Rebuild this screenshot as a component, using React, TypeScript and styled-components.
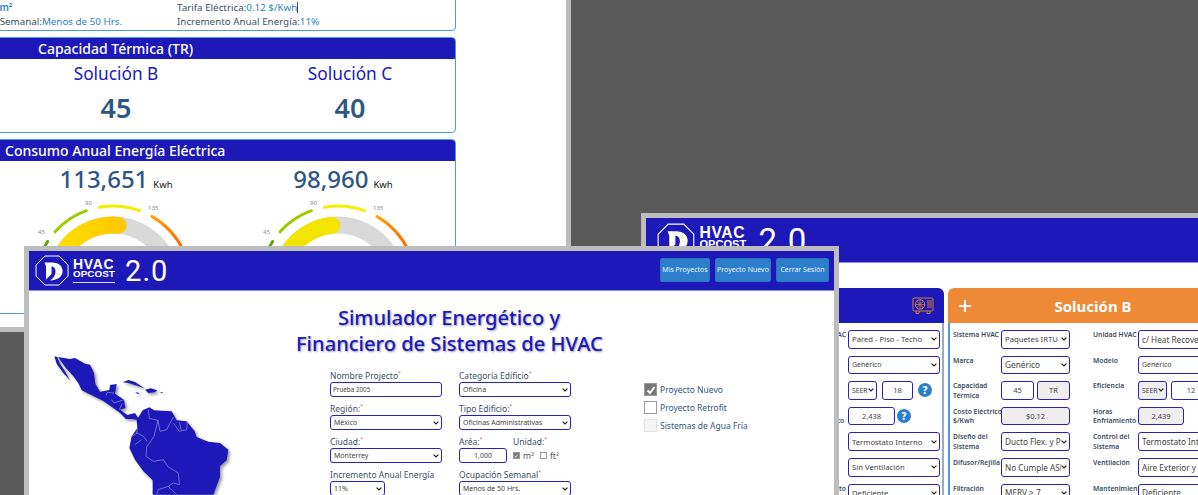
import React from "react";
import styled, { createGlobalStyle } from "styled-components";

const FONT = `"Noto Sans", "Open Sans", sans-serif`;
const BLUE = "#1c19b8";

const CHEVRON =
  "url(\"data:image/svg+xml,%3Csvg xmlns='http://www.w3.org/2000/svg' width='6' height='4' viewBox='0 0 6 4'%3E%3Cpath d='M.6.6 3 3 5.4.6' fill='none' stroke='%23222' stroke-width='1.2'/%3E%3C/svg%3E\")";

const GlobalStyle = createGlobalStyle`
  html, body { margin: 0; padding: 0; background: #595959; }
  body { width: 1198px; height: 495px; overflow: hidden; font-family: ${FONT}; }
`;

const Desktop = styled.div`
  position: relative;
  width: 1198px;
  height: 495px;
  overflow: hidden;
  background: #595959;
`;

const Win = styled.div<{ $left: number; $top: number; $width: number; $height: number }>`
  position: absolute;
  left: ${(p) => p.$left}px;
  top: ${(p) => p.$top}px;
  width: ${(p) => p.$width}px;
  height: ${(p) => p.$height}px;
  box-sizing: border-box;
  border: 5px solid #bdbdbd;
  background: #fff;
  overflow: hidden;
`;

/* report window (behind) */
const Report = styled.div`
  display: flex;
  flex-direction: column;
  gap: 6px;
  width: 516px;
`;

const Card = styled.section`
  box-sizing: border-box;
  border: 1px solid #4a9be8;
  border-radius: 4px;
  overflow: hidden;
`;

const InfoGrid = styled.div`
  display: grid;
  grid-template-columns: 229px 1fr;
  padding: 1px 0 1px 7px;
  font-size: 9.8px;
  line-height: 14px;
  color: #3c5068;
`;

const InfoValue = styled.span<{ $bold?: boolean }>`
  color: #2d7fcc;
  font-weight: ${(p) => (p.$bold ? 600 : 400)};
`;

const Caret = styled.span`
  display: inline-block;
  width: 1px;
  height: 11px;
  vertical-align: -2px;
  background: #2a4a7a;
`;

const CardTitle = styled.h3<{ $pad: number }>`
  margin: 0;
  height: 21px;
  padding-left: ${(p) => p.$pad}px;
  background: ${BLUE};
  color: #fff;
  font-size: 14px;
  font-weight: 500;
  line-height: 21px;
  white-space: nowrap;
`;

const SolutionGrid = styled.div`
  display: grid;
  grid-template-columns: 212px 212px;
  column-gap: 22px;
  padding-left: 69px;
`;

const SolutionCell = styled.div`
  display: flex;
  flex-direction: column;
  align-items: center;
  height: 73px;
`;

const SolutionName = styled.div`
  margin-top: 3px;
  color: ${BLUE};
  font-size: 17.3px;
  line-height: 24px;
`;

const SolutionNumber = styled.div`
  margin-top: 6px;
  color: #2e5684;
  font-size: 27px;
  font-weight: 600;
  line-height: 32px;
`;

const UsageCell = styled.div`
  display: flex;
  flex-direction: column;
`;

const UsageLine = styled.div<{ $shift: number }>`
  display: flex;
  align-items: baseline;
  justify-content: center;
  gap: 5px;
  padding-right: ${(p) => p.$shift}px;
  margin-top: 4px;
  height: 28px;
`;

const UsageNumber = styled.span`
  color: #2e5684;
  font-size: 24px;
  font-weight: 500;
  line-height: 28px;
`;

const UsageUnit = styled.span`
  color: #111;
  font-size: 9.5px;
`;

/* header */
const Bar = styled.header<{ $height: number; $pad: number }>`
  display: flex;
  align-items: center;
  box-sizing: border-box;
  height: ${(p) => p.$height}px;
  padding: 0 5px 0 ${(p) => p.$pad}px;
  background: ${BLUE};
  border-bottom: 1px solid #8e8ee0;
`;

const Brand = styled.div`
  display: flex;
  align-items: center;
`;

const BrandWords = styled.div<{ $scale: number }>`
  display: flex;
  flex-direction: column;
  width: ${(p) => 42 * p.$scale}px;
  margin-left: ${(p) => 4 * p.$scale}px;
  color: #fff;
  font-family: "Liberation Sans", sans-serif;
  font-size: ${(p) => 14 * p.$scale}px;
  font-weight: 700;
  letter-spacing: ${(p) => 0.6 * p.$scale}px;
  line-height: ${(p) => 10.5 * p.$scale}px;
`;

const BrandSub = styled.span<{ $scale: number }>`
  font-size: ${(p) => 9.9 * p.$scale}px;
  letter-spacing: 0;
`;

const BrandRule = styled.span<{ $scale: number }>`
  margin-top: 2px;
  border-top: 1px solid #d8d8f4;
  width: ${(p) => 42 * p.$scale}px;
`;

const Version = styled.span<{ $size: number; $gap: number }>`
  margin-left: ${(p) => p.$gap}px;
  color: #fff;
  font-family: "Roboto", sans-serif;
  font-size: ${(p) => p.$size}px;
  font-weight: 400;
  letter-spacing: 1px;
`;

const Actions = styled.nav`
  display: flex;
  gap: 5px;
  margin: 0 0 2px auto;
`;

const Action = styled.button<{ $width: number }>`
  width: ${(p) => p.$width}px;
  height: 24px;
  padding: 0;
  border: 1px solid #2a74c0;
  border-radius: 2px;
  background: #2d7fcc;
  color: #e8f2fb;
  font-family: ${FONT};
  font-size: 7px;
  white-space: nowrap;
`;

/* simulator form window */
const SimBody = styled.div`
  display: grid;
  grid-template-columns: 267px 306px 1fr;
`;

const MapColumn = styled.div`
  padding: 62px 0 0 21px;
`;

const Title = styled.h1`
  margin: 14px 0 0;
  color: ${BLUE};
  font-size: 20.1px;
  font-weight: 500;
  line-height: 26px;
  text-align: center;
  white-space: nowrap;
  text-shadow: 1px 1px 2px rgba(30, 30, 90, 0.45);
`;

const FormGrid = styled.div`
  display: grid;
  grid-template-columns: 112px 112px;
  column-gap: 17px;
  row-gap: 7px;
  margin: 14px 0 0 34px;
`;

const Field = styled.label`
  display: flex;
  flex-direction: column;
  gap: 1px;
  color: #3c5068;
  font-size: 8.5px;
  line-height: 10px;
  white-space: nowrap;
`;

const Req = styled.sup`
  color: #e06060;
  font-size: 5px;
  line-height: 0;
`;

const controlCss = `
  box-sizing: border-box;
  border: 1.3px solid #2a1fc4;
  border-radius: 3px;
  color: #444;
  font-family: ${FONT};
  outline: none;
`;

const Select = styled.select<{ $w?: number; $h?: number; $fs?: number; $gray?: boolean }>`
  ${controlCss}
  appearance: none;
  width: ${(p) => (p.$w ? `${p.$w}px` : "100%")};
  height: ${(p) => p.$h ?? 15}px;
  padding: 0 8px 0 3px;
  font-size: ${(p) => p.$fs ?? 7}px;
  background: ${(p) => (p.$gray ? "#efeded" : "#fff")} ${CHEVRON} no-repeat right 2px center;
`;

const TextBox = styled.input<{ $w?: number; $h?: number; $fs?: number; $gray?: boolean; $left?: boolean }>`
  ${controlCss}
  width: ${(p) => (p.$w ? `${p.$w}px` : "100%")};
  height: ${(p) => p.$h ?? 15}px;
  padding: 0 2px;
  font-size: ${(p) => p.$fs ?? 7}px;
  text-align: ${(p) => (p.$left ? "left" : "center")};
  background-color: ${(p) => (p.$gray ? "#efeded" : "#fff")};
`;

const AreaRow = styled.div`
  display: grid;
  grid-template-columns: 48px 1fr;
  column-gap: 6px;
`;

const UnitChecks = styled.div`
  display: flex;
  align-items: center;
  gap: 3px;
  height: 15px;
  font-size: 8.5px;
  color: #555;
`;

const MiniBox = styled.span<{ $on?: boolean; $gap?: number }>`
  display: inline-flex;
  align-items: center;
  justify-content: center;
  box-sizing: border-box;
  width: 7px;
  height: 7px;
  margin-left: ${(p) => p.$gap ?? 0}px;
  border: 1px solid #999;
  background: ${(p) => (p.$on ? "#777" : "#fff")};
  color: #fff;
  font-size: 6px;
`;

const CheckList = styled.div`
  display: flex;
  flex-direction: column;
  gap: 5px;
  margin: 92px 0 0 42px;
`;

const CheckRow = styled.div`
  display: flex;
  align-items: center;
  gap: 3px;
  height: 13px;
  color: #33557f;
  font-size: 8.5px;
  white-space: nowrap;
`;

const CheckBox = styled.span<{ $state: "on" | "off" | "dim" }>`
  display: flex;
  align-items: center;
  justify-content: center;
  box-sizing: border-box;
  width: 13px;
  height: 13px;
  border: 1px solid ${(p) => (p.$state === "dim" ? "#e2e2e2" : "#9a9a9a")};
  background: ${(p) => (p.$state === "on" ? "#777" : p.$state === "dim" ? "#f4f4f4" : "#fff")};
`;

/* solutions window */
const SolutionsBody = styled.div`
  display: flex;
  gap: 4px;
  padding: 25px 0 0 152px;
`;

const Panel = styled.section<{ $width: number }>`
  flex: none;
  width: ${(p) => p.$width}px;
  height: 300px;
  overflow: hidden;
`;

const PanelHead = styled.div<{ $color: string }>`
  display: flex;
  align-items: center;
  justify-content: space-between;
  position: relative;
  box-sizing: border-box;
  height: 35px;
  padding: 0 10px;
  border-radius: 6px 6px 0 0;
  background: ${(p) => p.$color};
  color: #fff;
`;

const PanelName = styled.span<{ $inset: number }>`
  position: absolute;
  left: 0;
  right: ${(p) => p.$inset}px;
  text-align: center;
  font-size: 15px;
  font-weight: 700;
`;

const PanelRows = styled.div<{ $side: "left" | "right" }>`
  display: flex;
  flex-direction: column;
  gap: 7px;
  height: 100%;
  padding-top: 7px;
  box-sizing: border-box;
  border-${(p) => p.$side}: 2px solid ${(p) => (p.$side === "left" ? "#4a9be8" : "#9fa8c4")};
`;

const PanelRow = styled.div<{ $cols: string }>`
  display: grid;
  grid-template-columns: ${(p) => p.$cols};
  align-items: start;
  height: 18.6px;
`;

const RowLabel = styled.span`
  color: #3c4c62;
  font-size: 6.8px;
  font-weight: 600;
  line-height: 9.5px;
  padding: 0 0 0 3px;
  white-space: pre;
`;

const RightLabel = styled(RowLabel)`
  text-align: right;
  direction: rtl;
  padding: 0 2px 0 0;
`;

const Pair = styled.div<{ $cols: string; $gap?: number }>`
  display: grid;
  grid-template-columns: ${(p) => p.$cols};
  column-gap: ${(p) => p.$gap ?? 3}px;
  align-items: center;
`;

const Help = styled.span`
  display: flex;
  align-items: center;
  justify-content: center;
  width: 14px;
  height: 14px;
  border-radius: 50%;
  background: #2d7fcc;
  color: #fff;
  font-size: 10px;
  font-weight: 800;
`;

const Logo = ({ h }: { h: number }) => (
  <svg width={h * 1.1} height={h} viewBox="0 0 34 31">
    <path d="M10 1 H24 L33 10 V21 L24 30 H10 L1 21 V10 Z" fill="none" stroke="#fff" strokeWidth="1" />
    <path
      d="M9.5 7.5 H17 C24 7.5 27.5 11.5 27.5 16 C27.5 21.5 23 25 15 25.5 C18.5 23.5 20.5 20 20.5 16.5 C20.5 13.5 19 11.5 16.5 11.5 V19 L11 24.5 V11.5 Z"
      fill="#fff"
    />
  </svg>
);

const Header = ({ height, pad, h, scale, version, gap, children }: {
  height: number;
  pad: number;
  h: number;
  scale: number;
  version: number;
  gap: number;
  children?: React.ReactNode;
}) => (
  <Bar $height={height} $pad={pad}>
    <Brand>
      <Logo h={h} />
      <BrandWords $scale={scale}>
        HVAC
        <BrandSub $scale={scale}>OPCOST</BrandSub>
        <BrandRule $scale={scale} />
      </BrandWords>
      <Version $size={version} $gap={gap}>2.0</Version>
    </Brand>
    {children}
  </Bar>
);

const polar = (cx: number, cy: number, r: number, deg: number) => {
  const a = (deg * Math.PI) / 180;
  return [cx + r * Math.sin(a), cy - r * Math.cos(a)];
};

const arc = (cx: number, cy: number, r: number, from: number, to: number) => {
  const [x1, y1] = polar(cx, cy, r, from);
  const [x2, y2] = polar(cx, cy, r, to);
  return `M${x1} ${y1} A${r} ${r} 0 ${to - from > 180 ? 1 : 0} 1 ${x2} ${y2}`;
};

const Gauge = ({ id, cx, end, c1, c2 }: { id: string; cx: number; end: number; c1: string; c2: string }) => {
  const cy = 91;
  return (
    <svg width="212" height="120" viewBox="0 0 212 120">
      <defs>
        <linearGradient id={id} x1="0" x2="1" y1="0" y2="0">
          <stop offset="0" stopColor={c1} />
          <stop offset="1" stopColor={c2} />
        </linearGradient>
        <linearGradient id={`${id}o`} x1="0" x2="1" y1="0" y2="0">
          <stop offset="0" stopColor="#ffa200" />
          <stop offset="1" stopColor="#ff5a00" />
        </linearGradient>
      </defs>
      <path d={arc(cx, cy, 59, -110, 110)} fill="none" stroke="#d9d9d9" strokeWidth="17" />
      <path d={arc(cx, cy, 59, -110, end)} fill="none" stroke={`url(#${id})`} strokeWidth="17" strokeLinecap="round" />
      <g fill="none" strokeWidth="3" strokeLinecap="round">
        <path d={arc(cx, cy, 78, -100, -57)} stroke="#5aa800" />
        <path d={arc(cx, cy, 78, -48, -20)} stroke="#9ccc00" />
        <path d={arc(cx, cy, 78, -10, 20)} stroke="#f4ee00" />
        <path d={arc(cx, cy, 78, 30, 100)} stroke={`url(#${id}o)`} />
      </g>
      <g fontSize="6" fill="#888" fontFamily={FONT}>
        <text x={cx - 75} y={41}>45</text>
        <text x={cx - 28} y={12}>90</text>
        <text x={cx + 35} y={17}>135</text>
      </g>
    </svg>
  );
};

const LatamMap = () => (
  <svg
    width="184"
    height="142"
    viewBox="90 340 552 426"
    style={{ filter: "drop-shadow(2px 2px 1.5px #999)", display: "block" }}
  >
    <g fill={BLUE}>
      <path d="M103 350 L112 352 L120 372 L135 395 L150 422 L128 398 L110 372 Z" />
      <path d="M114 352 L150 358 L165 355 L195 372 L210 375 L222 400 L226 432 L240 456 L268 451 L270 436 L290 433 L285 462 L312 480 L316 505 L300 510 L322 526 L345 520 L354 535 L368 512 L388 503 L402 512 L455 515 L470 542 L500 545 L524 575 L530 592 L565 606 L600 610 L625 630 L620 662 L600 680 L600 712 L580 765 L398 765 L398 722 L370 695 L345 660 L328 625 L335 590 L352 565 L350 540 L335 538 L318 538 L298 518 L250 484 L185 452 L175 430 L160 410 L140 388 L125 368 Z" />
      <path d="M308 428 L325 421 L345 427 L375 447 L352 438 L325 430 Z" />
      <path d="M375 450 L392 446 L412 452 L404 458 L385 460 Z" />
      <path d="M346 458 L360 460 L352 463 Z" />
      <path d="M420 457 L431 459 L424 461 Z" />
    </g>
    <g fill="none" stroke="#b9b9ee" strokeWidth="1.6">
      <path d="M258 468 L262 458 L282 460 M275 480 L282 490 L312 480 M298 510 L306 492" />
      <path d="M385 510 L388 536 L414 542 L402 590 L380 622 L378 650 L400 665 L430 660 L445 682 L475 700 L478 735 L460 730 L445 740 L415 750 L410 765" />
      <path d="M335 590 L352 580 L370 590 L382 606 M352 565 L350 580 M345 615 L365 600" />
      <path d="M414 542 L420 575 L440 570 L460 532 M460 550 L478 575 L500 570 L502 545 M478 548 L484 572" />
      <path d="M445 740 L470 765" />
    </g>
  </svg>
);

const OutdoorUnit = () => (
  <svg width="22" height="17" viewBox="0 0 22 17" fill="none" stroke="#d07a3a" strokeWidth="1">
    <rect x="1" y="1" width="20" height="13" rx="1" />
    <circle cx="8" cy="7.5" r="4.8" />
    <path d="M8 2.7 V12.3 M3.2 7.5 H12.8 M4.6 4.1 L11.4 10.9 M11.4 4.1 L4.6 10.9" strokeWidth="0.8" />
    <path d="M15 4 H20 M15 6 H20 M15 8 H20 M15 10 H20" />
    <path d="M4 14 V16.5 H7 V14 M15 14 V16.5 H18 V14" />
  </svg>
);

const Ctl = ({ v, w, fs, gray }: { v: string; w?: number; fs?: number; gray?: boolean }) => (
  <Select $w={w} $h={18.6} $fs={fs ?? 7.7} $gray={gray} defaultValue={v}>
    <option>{v}</option>
  </Select>
);

const Box = ({ v, w, gray }: { v: string; w?: number; gray?: boolean }) => (
  <TextBox $w={w} $h={18.6} $fs={7.5} $gray={gray} defaultValue={v} readOnly />
);

const COLS_A = "50px 92px";
const COLS_B = "51px 69px 20px 48px 100px";

export default function App() {
  return (
    <Desktop>
      <GlobalStyle />

      <Win $left={-65} $top={-20} $width={636} $height={352}>
        <Report>
          <Card>
            <InfoGrid>
              <span>Región:<InfoValue>México</InfoValue></span>
              <span>Categoría:<InfoValue>Oficina</InfoValue></span>
              <span>Área:<InfoValue $bold>1,000 m²</InfoValue></span>
              <span>Tarifa Eléctrica:<InfoValue>0.12 $/Kwh</InfoValue><Caret /></span>
              <span>Ocupación Semanal:<InfoValue>Menos de 50 Hrs.</InfoValue></span>
              <span>Incremento Anual Energía:<InfoValue>11%</InfoValue></span>
            </InfoGrid>
          </Card>
          <Card>
            <CardTitle $pad={97}>Capacidad Térmica (TR)</CardTitle>
            <SolutionGrid>
              <SolutionCell>
                <SolutionName>Solución B</SolutionName>
                <SolutionNumber>45</SolutionNumber>
              </SolutionCell>
              <SolutionCell>
                <SolutionName>Solución C</SolutionName>
                <SolutionNumber>40</SolutionNumber>
              </SolutionCell>
            </SolutionGrid>
          </Card>
          <Card>
            <CardTitle $pad={64}>Consumo Anual Energía Eléctrica</CardTitle>
            <SolutionGrid>
              <UsageCell>
                <UsageLine $shift={0}>
                  <UsageNumber>113,651</UsageNumber>
                  <UsageUnit>Kwh</UsageUnit>
                </UsageLine>
                <Gauge id="gb" cx={103} end={5} c1="#ffe000" c2="#ffc800" />
              </UsageCell>
              <UsageCell>
                <UsageLine $shift={14}>
                  <UsageNumber>98,960</UsageNumber>
                  <UsageUnit>Kwh</UsageUnit>
                </UsageLine>
                <Gauge id="gc" cx={94} end={-6} c1="#f2e600" c2="#f4e400" />
              </UsageCell>
            </SolutionGrid>
          </Card>
        </Report>
      </Win>

      <Win $left={641} $top={213} $width={700} $height={340}>
        <Header height={45} pad={11} h={34.5} scale={1.12} version={33} gap={12} />
        <SolutionsBody>
          <Panel $width={146}>
            <PanelHead $color={BLUE}>
              <span />
              <OutdoorUnit />
            </PanelHead>
            <PanelRows $side="right">
              <PanelRow $cols={COLS_A}><RightLabel>Unidad HVAC</RightLabel><Ctl v="Pared - Piso - Techo" /></PanelRow>
              <PanelRow $cols={COLS_A}><RowLabel>Modelo</RowLabel><Ctl v="Genérico" fs={7} /></PanelRow>
              <PanelRow $cols={COLS_A}>
                <RowLabel>Eficiencia</RowLabel>
                <Pair $cols="29px 31px 14px" $gap={5}><Ctl v="SEER" fs={6.8} /><Box v="18" /><Help>?</Help></Pair>
              </PanelRow>
              <PanelRow $cols={COLS_A}>
                <RowLabel>{"Horas\nEnfriamiento"}</RowLabel>
                <Pair $cols="47px 15px" $gap={2}><Box v="2,438" /><Help>?</Help></Pair>
              </PanelRow>
              <PanelRow $cols={COLS_A}><RowLabel>{"Control del\nSistema"}</RowLabel><Ctl v="Termostato Interno" /></PanelRow>
              <PanelRow $cols={COLS_A}><RowLabel>Ventilación</RowLabel><Ctl v="Sin Ventilación" /></PanelRow>
              <PanelRow $cols={COLS_A}><RightLabel>Mantenimiento</RightLabel><Ctl v="Deficiente" /></PanelRow>
            </PanelRows>
          </Panel>
          <Panel $width={420}>
            <PanelHead $color="#ee8a36">
              <svg width="14" height="14" viewBox="0 0 14 14"><path d="M7 1 V13 M1 7 H13" stroke="#fff" strokeWidth="2" /></svg>
              <PanelName $inset={130}>Solución B</PanelName>
            </PanelHead>
            <PanelRows $side="left">
              <PanelRow $cols={COLS_B}>
                <RowLabel>Sistema HVAC</RowLabel><Ctl v="Paquetes IRTU" />
                <span /><RowLabel>Unidad HVAC</RowLabel><Ctl v="c/ Heat Recovery" fs={8.2} />
              </PanelRow>
              <PanelRow $cols={COLS_B}>
                <RowLabel>Marca</RowLabel><Ctl v="Genérico" fs={8.3} />
                <span /><RowLabel>Modelo</RowLabel><Ctl v="Genérico" fs={7} />
              </PanelRow>
              <PanelRow $cols={COLS_B}>
                <RowLabel>{"Capacidad\nTérmica"}</RowLabel>
                <Pair $cols="33px 33px"><Box v="45" /><Box v="TR" gray /></Pair>
                <span /><RowLabel>Eficiencia</RowLabel>
                <Pair $cols="29px 40px" $gap={4}><Ctl v="SEER" fs={6.8} gray /><Box v="12" /></Pair>
              </PanelRow>
              <PanelRow $cols={COLS_B}>
                <RowLabel>{"Costo Eléctrico\n$/Kwh"}</RowLabel><Box v="$0.12" gray />
                <span /><RowLabel>{"Horas\nEnfriamiento"}</RowLabel><Box v="2,439" w={46} gray />
              </PanelRow>
              <PanelRow $cols={COLS_B}>
                <RowLabel>{"Diseño del\nSistema"}</RowLabel><Ctl v="Ducto Flex. y Plenum" fs={8.2} />
                <span /><RowLabel>{"Control del\nSistema"}</RowLabel><Ctl v="Termostato Interno" fs={8.2} />
              </PanelRow>
              <PanelRow $cols={COLS_B}>
                <RowLabel>Difusor/Rejilla</RowLabel><Ctl v="No Cumple ASHRAE" fs={8.2} />
                <span /><RowLabel>Ventilación</RowLabel><Ctl v="Aire Exterior y Retorno" fs={8.2} />
              </PanelRow>
              <PanelRow $cols={COLS_B}>
                <RowLabel>Filtración</RowLabel><Ctl v="MERV > 7" fs={8.2} />
                <span /><RowLabel>Mantenimiento</RowLabel><Ctl v="Deficiente" fs={8.2} />
              </PanelRow>
            </PanelRows>
          </Panel>
        </SolutionsBody>
      </Win>

      <Win $left={24} $top={246} $width={815} $height={270}>
        <Header height={40} pad={6} h={31} scale={1} version={29} gap={10}>
          <Actions>
            <Action $width={50}>Mis Proyectos</Action>
            <Action $width={56}>Proyecto Nuevo</Action>
            <Action $width={53}>Cerrar Sesión</Action>
          </Actions>
        </Header>
        <SimBody>
          <MapColumn>
            <LatamMap />
          </MapColumn>
          <div>
            <Title>
              Simulador Energético y
              <br />
              Financiero de Sistemas de HVAC
            </Title>
            <FormGrid>
              <Field>
                <span>Nombre Projecto<Req>*</Req></span>
                <TextBox defaultValue="Prueba 2005" $left $fs={6.3} />
              </Field>
              <Field>
                <span>Categoría Edificio<Req>*</Req></span>
                <Select defaultValue="Oficina"><option>Oficina</option></Select>
              </Field>
              <Field>
                <span>Región:<Req>*</Req></span>
                <Select defaultValue="México"><option>México</option></Select>
              </Field>
              <Field>
                <span>Tipo Edificio:<Req>*</Req></span>
                <Select defaultValue="Oficinas Administrativas"><option>Oficinas Administrativas</option></Select>
              </Field>
              <Field>
                <span>Ciudad:<Req>*</Req></span>
                <Select defaultValue="Monterrey"><option>Monterrey</option></Select>
              </Field>
              <AreaRow>
                <Field>
                  <span>Aréa:<Req>*</Req></span>
                  <TextBox defaultValue="1,000" />
                </Field>
                <Field>
                  <span>Unidad:<Req>*</Req></span>
                  <UnitChecks>
                    <MiniBox $on>✓</MiniBox> m²
                    <MiniBox $gap={3} /> ft²
                  </UnitChecks>
                </Field>
              </AreaRow>
              <Field>
                <span>Incremento Anual Energía</span>
                <Select $w={55} defaultValue="11%"><option>11%</option></Select>
              </Field>
              <Field>
                <span>Ocupación Semanal<Req>*</Req></span>
                <Select defaultValue="Menos de 50 Hrs."><option>Menos de 50 Hrs.</option></Select>
              </Field>
            </FormGrid>
          </div>
          <CheckList>
            <CheckRow>
              <CheckBox $state="on">
                <svg width="10" height="10" viewBox="0 0 10 10"><path d="M1.5 5.5 L4 8 L8.5 2" fill="none" stroke="#fff" strokeWidth="2" /></svg>
              </CheckBox>
              Proyecto Nuevo
            </CheckRow>
            <CheckRow><CheckBox $state="off" />Proyecto Retrofit</CheckRow>
            <CheckRow><CheckBox $state="dim" />Sistemas de Agua Fría</CheckRow>
          </CheckList>
        </SimBody>
      </Win>
    </Desktop>
  );
}
